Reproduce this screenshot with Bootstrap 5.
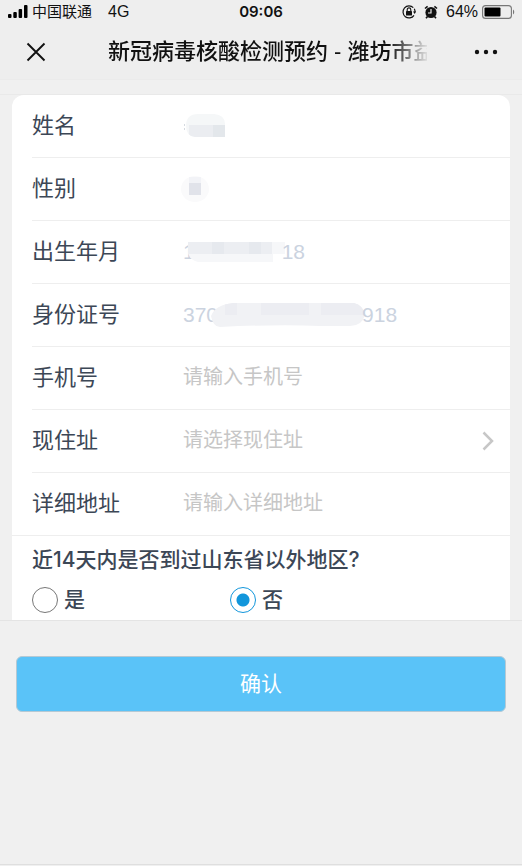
<!DOCTYPE html>
<html lang="zh-CN">
<head>
<meta charset="utf-8">
<meta name="viewport" content="width=device-width, initial-scale=1">
<title>新冠病毒核酸检测预约</title>
<link href="https://cdn.jsdelivr.net/npm/bootstrap@5.3.0/dist/css/bootstrap.min.css" rel="stylesheet">
<style>
body { background: #f0f0f0; color: #3c4756; font-family: "Liberation Sans", "Noto Sans CJK SC", sans-serif; }
.top-area { background: #eeeeee; color: #111; border-bottom: 1px solid #ebebeb; }
.status-bar { height: 24px; font-size: 15px; line-height: 24px; padding: 0 7px; }
.status-side { flex: 1 1 0; }
.status-time { font-family: Inter, sans-serif; font-weight: 600; }
.status-latin { font-size: 16px; }
.title-bar { height: 55px; padding: 1px 24px 0 26px; }
.page-title { font-size: 22px; line-height: 32px; font-weight: 500; margin: 0 47px 0 62px; white-space: nowrap; overflow: hidden;
  -webkit-mask-image: linear-gradient(to right, #000 88%, transparent 101%); mask-image: linear-gradient(to right, #000 88%, transparent 101%); }
.form-band { margin-top: 14px; border-top: 1px solid #e9e9e9; border-bottom: 1px solid #e4e4e4; padding: 0 12px; }
.form-panel { background: #fff; border-radius: 12px 12px 0 0; }
.field-row { height: 63px; margin-left: 20px; border-bottom: 1px solid #eeeeee; }
.field-row.last-row { margin-left: 0; padding-left: 20px; }
.field-name { width: 151px; font-size: 22px; line-height: 32px; }
.field-value { font-size: 21px; line-height: 32px; color: #cbd3df; }
.pixel-cover { margin: 0 -3px 0 -7px; }
.field-entry { font-size: 20px; line-height: 30px; color: #c6c6c6; border: 0; padding: 0; background: transparent; appearance: none; outline-offset: 4px; margin-bottom: 3px; }
.field-entry::placeholder { color: #c6c6c6; opacity: 1; }
.arrow { margin-right: 16px; }
.question { font-family: Inter, "Noto Sans CJK SC", sans-serif; font-size: 21px; line-height: 32px; font-weight: 500; padding: 8px 20px 0; }
.choice-row { padding: 10px 20px 6px; }
.choice { font-size: 21px; line-height: 28px; font-weight: 500; width: 198px; gap: 6px; }
.choice input { appearance: none; width: 26px; height: 26px; margin: 0; border: 1px solid #777; border-radius: 50%; background: #fff; }
.choice input:checked { border-color: #1296db; background: radial-gradient(circle, #1296db 6px, #fff 7px); }
.submit-area { padding: 35px 16px 0; }
.btn-submit, .btn-submit:hover { background: #5ac3f8; color: #fff; border: 1px solid #b5c9d4; border-radius: 6px; font-size: 21px; line-height: 32px; padding: 11px 0; }
.page-end { border-bottom: 1px solid #dfdfdf; margin-bottom: 1px; }
</style>
<script src="https://cdn.jsdelivr.net/npm/bootstrap@5.3.0/dist/js/bootstrap.bundle.min.js"></script>
</head>
<body class="d-flex flex-column min-vh-100">
<header class="top-area">
  <div class="status-bar d-flex align-items-center">
    <div class="status-side d-flex align-items-center">
      <svg width="21" height="14" viewBox="0 0 21 14" fill="#000" aria-hidden="true"><rect x="1" y="9" width="3.500" height="4" rx="1"/><rect x="6.300" y="7" width="3.500" height="6" rx="1"/><rect x="11.600" y="4" width="3.500" height="9" rx="1"/><rect x="17" y="0" width="3.500" height="13" rx="1"/></svg>
      <span class="ms-1">中国联通</span><span class="status-latin ms-3">4G</span>
    </div>
    <span class="status-time">09:06</span>
    <div class="status-side d-flex align-items-center justify-content-end">
      <svg width="14" height="14" viewBox="0 0 14 14" aria-hidden="true"><path d="M11.300 2.700A6 6 0 1 0 12 10.300M12.300 3.800A6 6 0 0 1 13 7" fill="none" stroke="#111" stroke-width="1.200"/><path d="M11 6.500h3.200L12.700 9z" fill="#111"/><rect x="4" y="6" width="6" height="4.500" rx=".6" fill="#111"/><path d="M5.200 6V4.700a1.800 1.800 0 0 1 3.600 0V6" fill="none" stroke="#111" stroke-width="1.100"/></svg>
      <svg class="ms-2" width="14" height="14" viewBox="0 0 14 14" aria-hidden="true"><circle cx="7" cy="7.500" r="5.600" fill="#111"/><path d="M1 3.500L3.600 1.300M13 3.500L10.400 1.300M3.500 11.500L2 13.300M10.500 11.500L12 13.300" stroke="#111" stroke-width="1.600"/><path d="M7 4v4H4" fill="none" stroke="#eee" stroke-width="1.200"/></svg>
      <span class="status-latin ms-2">64%</span>
      <svg class="ms-1" width="33" height="14" viewBox="0 0 33 14" aria-hidden="true"><rect x=".6" y=".6" width="28.800" height="12.800" rx="3" fill="none" stroke="#777" stroke-width="1.100"/><rect x="2.500" y="2.500" width="16" height="9" rx="1" fill="#000"/><path d="M31 4.500v5c1.600-.8 1.600-4.200 0-5z" fill="#777"/></svg>
    </div>
  </div>
  <div class="title-bar d-flex align-items-center">
    <button type="button" class="btn p-0 border-0 d-flex" aria-label="关闭"><svg width="20" height="20" viewBox="0 0 20 20"><path d="M1.500 1.500l17 17M18.500 1.500l-17 17" stroke="#111" stroke-width="1.900"/></svg></button>
    <h1 class="page-title flex-fill">新冠病毒核酸检测预约 - 潍坊市益</h1>
    <button type="button" class="btn p-0 border-0 d-flex" aria-label="更多"><svg width="24" height="6" viewBox="0 0 24 6" fill="#111"><circle cx="3" cy="3" r="2.200"/><circle cx="12" cy="3" r="2.200"/><circle cx="21" cy="3" r="2.200"/></svg></button>
  </div>
</header>
<main class="flex-fill page-end">
  <form>
    <div class="form-band">
      <div class="form-panel">
        <div class="field-row d-flex align-items-center">
          <label class="field-name" for="person-name">姓名</label>
          <output class="field-value d-flex" id="person-name" aria-label="已隐藏"><svg width="44" height="24" viewBox="0 0 44 24"><defs><clipPath id="name-shape"><path d="M3 12Q3 0 15 0H31Q42 1 42 10V23H12Q3 22 3 12z"/></clipPath></defs><g clip-path="url(#name-shape)"><path fill="#f5f7f8" d="M0 0h44v24H0z"/><path fill="#ebedf1" d="M6 11h24v13H6z"/><path fill="#e3e7eb" d="M30 11h14v13H30z"/></g><path fill="#d5dae0" d="M1 10h1v2H1zM1 14h1v2H1z"/></svg></output>
        </div>
        <div class="field-row d-flex align-items-center">
          <label class="field-name" for="gender">性别</label>
          <output class="field-value d-flex" id="gender" aria-label="已隐藏"><svg width="28" height="26" viewBox="0 0 28 26" overflow="visible"><ellipse cx="12" cy="13" rx="14" ry="13" fill="#fafafb"/><path fill="#f2f3f7" d="M6 1h12v6H6z"/><path fill="#e1e3ea" d="M6 7h12v12H6z"/></svg></output>
        </div>
        <div class="field-row d-flex align-items-center">
          <label class="field-name" for="birth">出生年月</label>
          <output class="field-value d-flex align-items-center" id="birth"><span>1</span><svg class="pixel-cover" width="97" height="20" viewBox="0 0 97 20"><defs><clipPath id="birth-shape"><path d="M0 0H97V12H85V20H10Q1 18 0 10z"/></clipPath></defs><g clip-path="url(#birth-shape)"><path fill="#f6f7f9" d="M0 0h97v20H0z"/><path fill="#eceef2" d="M0 0h84v12H0z"/><path fill="#e6e9ee" d="M24 0h12v12H24zM61 0h12v12H61z"/></g></svg><span>18</span></output>
        </div>
        <div class="field-row d-flex align-items-center">
          <label class="field-name" for="id-number">身份证号</label>
          <output class="field-value d-flex align-items-center" id="id-number"><span>370</span><svg class="pixel-cover" width="154" height="24" viewBox="0 0 154 24"><defs><clipPath id="id-shape"><path d="M0 13Q4 2 22 0H143Q152 2 154 12Q151 23 139 23H109Q69 21 9 24Q2 24 0 13z"/></clipPath></defs><g clip-path="url(#id-shape)"><path fill="#f1f2f5" d="M0 0h154v24H0z"/><path fill="#ecedf2" d="M14 0h12v12H14zM50 0h48v12H50zM110 0h44v12H110z"/></g></svg><span>918</span></output>
        </div>
        <div class="field-row d-flex align-items-center">
          <label class="field-name" for="phone">手机号</label>
          <input class="field-entry flex-fill" id="phone" type="tel" placeholder="请输入手机号">
        </div>
        <div class="field-row d-flex align-items-center">
          <label class="field-name" for="area">现住址</label>
          <select class="field-entry flex-fill" id="area"><option>请选择现住址</option></select>
          <svg class="arrow" width="12" height="20" viewBox="0 0 12 20" aria-hidden="true"><path d="M1.500 1.500L10 10l-8.500 8.500" fill="none" stroke="#c7c7c7" stroke-width="2.500"/></svg>
        </div>
        <div class="field-row last-row d-flex align-items-center">
          <label class="field-name" for="address">详细地址</label>
          <input class="field-entry flex-fill" id="address" type="text" placeholder="请输入详细地址">
        </div>
        <fieldset>
          <legend class="question m-0">近14天内是否到过山东省以外地区?</legend>
          <div class="choice-row d-flex">
            <label class="choice d-flex align-items-center"><input type="radio" name="travel">是</label>
            <label class="choice d-flex align-items-center"><input type="radio" name="travel" checked>否</label>
          </div>
        </fieldset>
      </div>
    </div>
    <div class="submit-area"><button type="button" class="btn btn-submit w-100">确认</button></div>
  </form>
</main>
</body>
</html>
